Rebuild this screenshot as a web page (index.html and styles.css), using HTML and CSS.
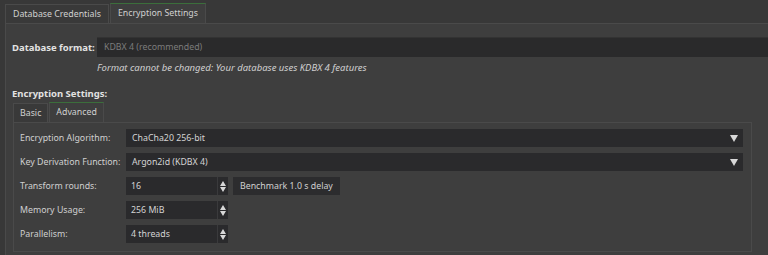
FILE: index.html
```html
<!DOCTYPE html>
<html>
<head>
<meta charset="utf-8">
<link rel="stylesheet" href="styles.css">
</head>
<body>
<div class="window">
  <div class="tabbar">
    <div class="tab">Database Credentials</div>
    <div class="tab active">Encryption Settings</div>
  </div>
  <div class="panel">
    <div class="format-row">
      <div class="label-bold">Database format:</div>
      <div class="field disabled">KDBX 4 (recommended)</div>
    </div>
    <div class="hint">Format cannot be changed: Your database uses KDBX 4 features</div>
    <div class="section-title">Encryption Settings:</div>
    <div class="subtabs">
      <div class="tab">Basic</div>
      <div class="tab active">Advanced</div>
    </div>
    <div class="subpanel">
      <div class="lbl">Encryption Algorithm:</div>
      <div class="combo"><span>ChaCha20 256-bit</span><span class="arrow"></span></div>
      <div class="lbl">Key Derivation Function:</div>
      <div class="combo"><span>Argon2id (KDBX 4)</span><span class="arrow"></span></div>
      <div class="lbl">Transform rounds:</div>
      <div class="ctrl-line">
        <div class="spin"><span class="val">16</span><span class="btns"><span class="up"></span><span class="down"></span></span></div>
        <div class="button">Benchmark 1.0 s delay</div>
      </div>
      <div class="lbl">Memory Usage:</div>
      <div class="ctrl-line">
        <div class="spin"><span class="val">256 MiB</span><span class="btns"><span class="up"></span><span class="down"></span></span></div>
      </div>
      <div class="lbl">Parallelism:</div>
      <div class="ctrl-line">
        <div class="spin"><span class="val">4 threads</span><span class="btns"><span class="up"></span><span class="down"></span></span></div>
      </div>
    </div>
  </div>
</div>
</body>
</html>
```
FILE: styles.css
```css
html, body {
  margin: 0;
  padding: 0;
  background: #383838;
  width: 768px;
  height: 255px;
  overflow: hidden;
  font-family: "Noto Sans", "DejaVu Sans", sans-serif;
  font-size: 8.8px;
  color: #d4d4d4;
  white-space: nowrap;
}
.window {
  padding: 3px 0 0 5px;
}
.tabbar, .subtabs {
  display: flex;
  align-items: flex-end;
}
.tab {
  height: 18px;
  line-height: 18px;
  padding: 0 7px;
  border: 1px solid #4a4a4a;
  border-bottom: none;
  background: #393939;
  color: #d0d0d0;
  margin-right: 1px;
}
.tab.active {
  background: #3e3e3e;
  border-top: 1px solid #3b6e3b;
  height: 19px;
  line-height: 19px;
}
.panel {
  background: #3e3e3e;
  border: 1px solid #4a4a4a;
  border-right: none;
  height: 240px;
  padding: 13px 0 0 6px;
  box-sizing: border-box;
}
.format-row {
  display: flex;
  align-items: center;
  height: 20px;
}
.label-bold, .section-title {
  font-weight: bold;
  font-size: 9.5px;
  color: #e2e2e2;
}
.label-bold {
  width: 85px;
}
.field {
  flex: 1;
  height: 19px;
  line-height: 19px;
  background: #2a2a2b;
  border-top: 1px solid #333;
  padding-left: 7px;
}
.field.disabled {
  color: #7c7c7c;
}
.hint {
  font-style: italic;
  font-size: 9.5px;
  color: #d0d0d0;
  margin-top: 4px;
  padding-left: 85px;
  height: 14px;
  line-height: 14px;
}
.section-title {
  margin-top: 12px;
  height: 13px;
  line-height: 13px;
}
.subtabs {
  margin-top: 2px;
  margin-left: 1px;
}
.subtabs .tab {
  padding: 0 6px;
}
.subpanel {
  width: 739px;
  height: 130px;
  box-sizing: border-box;
  margin-left: 1px;
  border: 1px solid #4a4a4a;
  background: #3e3e3e;
  display: grid;
  grid-template-columns: 106px 1fr;
  grid-auto-rows: 18px;
  row-gap: 6px;
  padding: 6px 8px 0 6px;
  align-items: center;
}
.lbl {
  color: #d0d0d0;
  line-height: 18px;
}
.combo {
  height: 18px;
  line-height: 18px;
  background: #2a2a2c;
  display: flex;
  align-items: center;
  justify-content: space-between;
  padding: 0 5px 0 6px;
}
.arrow {
  width: 0;
  height: 0;
  border-left: 4px solid transparent;
  border-right: 4px solid transparent;
  border-top: 7px solid #d8d8d8;
}
.ctrl-line {
  display: flex;
  align-items: center;
  gap: 5px;
  height: 18px;
}
.spin {
  width: 102px;
  height: 18px;
  background: #2a2a2c;
  display: flex;
  align-items: stretch;
}
.spin .val {
  flex: 1;
  line-height: 18px;
  padding-left: 5px;
}
.btns {
  width: 10px;
  border-left: 1px solid #3a3a3c;
  display: flex;
  flex-direction: column;
  align-items: center;
  justify-content: center;
  gap: 1px;
}
.up, .down {
  width: 0;
  height: 0;
  border-left: 3px solid transparent;
  border-right: 3px solid transparent;
}
.up { border-bottom: 5px solid #d8d8d8; }
.down { border-top: 5px solid #d8d8d8; }
.button {
  height: 18px;
  line-height: 18px;
  padding: 0 7px;
  background: #2c2c2e;
  color: #d0d0d0;
}
```
